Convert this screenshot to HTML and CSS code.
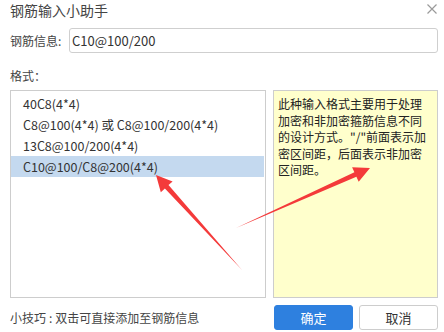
FILE: index.html
```html
<!DOCTYPE html>
<html>
    <head>
        <meta charset="UTF-8">
        <title>钢筋输入小助手</title>
        <link rel="stylesheet" href="styles.css">
    </head>

    <body>
        <div class="dialog">
            <div class="title-bar">
                <span class="title">钢筋输入小助手</span>
                <span class="close">
                    <svg width="10" height="10" viewBox="0 0 10 10"><path d="M0.5 0.5 L9.5 9.5 M9.5 0.5 L0.5 9.5" stroke="#9a9a9a" stroke-width="1.2" fill="none"/></svg>
                </span>
            </div>

            <div class="field">
                <label for="info">钢筋信息:</label>
                <input type="text" id="info" value="C10@100/200">
            </div>

            <div class="format-label">格式：</div>

            <div class="panels">
                <ul class="format-list">
                    <li>40C8(4*4)</li>
                    <li>C8@100(4*4) 或 C8@100/200(4*4)</li>
                    <li>13C8@100/200(4*4)</li>
                    <li class="selected">C10@100/C8@200(4*4)</li>
                </ul>
                <div class="format-desc">此种输入格式主要用于处理<br>加密和非加密箍筋信息不同<br>的设计方式。"/"前面表示加<br>密区间距，后面表示非加密<br>区间距。</div>
            </div>

            <div class="footer">
                <span class="tip">小技巧<span class="colon">:</span>双击可直接添加至钢筋信息</span>
                <button class="btn btn-primary">确定</button>
                <button class="btn">取消</button>
            </div>
        </div>

        <svg class="arrows" width="444" height="332" viewBox="0 0 444 332">
            <polygon points="156,175 172.6,181.4 168.5,185.1 242,270 164.9,188.5 160.8,192.2" fill="#f43a3a"/>
            <polygon points="370,168 358.7,181.8 356.4,176.8 236,228 354.4,172.2 352.1,167.2" fill="#f43a3a"/>
        </svg>
    </body>
</html>
```

FILE: styles.css
```css
body {
    margin: 0;
    width: 444px;
    height: 332px;
    background: #fff;
    font-family: 'Noto Sans CJK SC', 'Microsoft YaHei', sans-serif;
    color: #333;
    position: relative;
    overflow: hidden;
}
.dialog {
    padding: 0 6px 0 10px;
}
.title-bar {
    height: 20px;
    display: flex;
    justify-content: space-between;
    align-items: center;
}
.title {
    font-size: 14px;
    line-height: 19px;
    color: #444;
}
.close {
    display: flex;
    margin-top: -3px;
    margin-right: 1px;
}
.field {
    margin-top: 8px;
    display: flex;
    align-items: center;
}
.field label {
    font-size: 12px;
    width: 59px;
    color: #444;
}
.field input {
    flex: 1;
    height: 25px;
    box-sizing: border-box;
    border: 1px solid #cfcfcf;
    border-radius: 3px;
    padding: 0 0 0 2px;
    font-family: inherit;
    font-size: 13px;
    color: #333;
    outline: none;
}
.format-label {
    font-size: 12px;
    line-height: 20px;
    margin-top: 13px;
    margin-bottom: 4px;
    color: #444;
}
.panels {
    height: 208px;
    display: flex;
    gap: 7px;
}
.format-list {
    width: 256px;
    box-sizing: border-box;
    margin: 0;
    padding: 2px 1px 0 0;
    list-style: none;
    border: 1px solid #cdcdcd;
}
.format-list li {
    height: 21px;
    line-height: 21px;
    padding-left: 12px;
    font-size: 12.5px;
    color: #333;
}
.format-list li.selected {
    background: #c4d9ef;
}
.format-desc {
    flex: 1;
    box-sizing: border-box;
    border: 1px solid #cdcdcd;
    background: #ffffcc;
    padding: 5px 0 0 4px;
    font-size: 12px;
    line-height: 16.6px;
    color: #222;
    white-space: nowrap;
}
.footer {
    margin-top: 7px;
    display: flex;
    align-items: center;
}
.tip {
    flex: 1;
    font-size: 12px;
    color: #444;
}
.tip .colon {
    margin: 0 3px;
}
.btn {
    width: 79px;
    height: 25px;
    margin-left: 6px;
    border: 1px solid #cdcdcd;
    border-radius: 3px;
    background: #fff;
    font-family: inherit;
    font-size: 13px;
    color: #333;
    padding: 0;
}
.btn-primary {
    background: #2e80df;
    border-color: #2e80df;
    color: #fff;
}
.arrows {
    position: absolute;
    left: 0;
    top: 0;
    pointer-events: none;
}
```
